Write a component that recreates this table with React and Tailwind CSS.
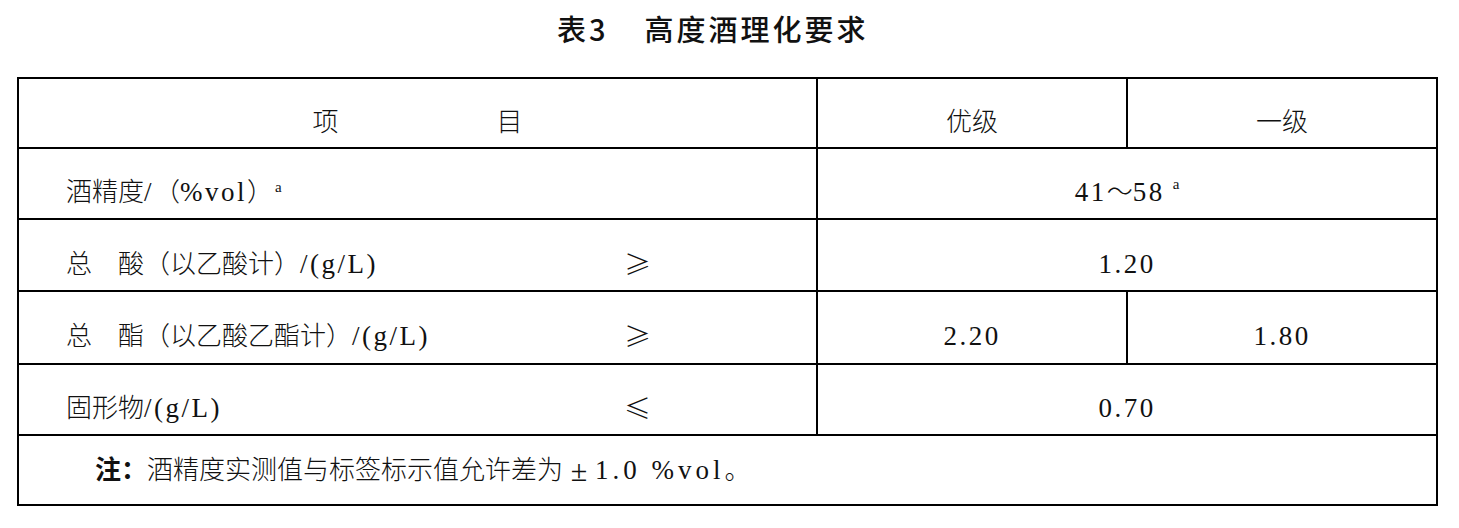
import React from "react";

const body = { fontFamily: '"Liberation Serif", "Noto Sans CJK SC", serif' };
const cjk = { fontFamily: '"Noto Sans CJK SC", sans-serif' };

// ASCII runs are set wider, like the half-width latin of the original
const A = ({ children, className = "tracking-[2.5px]" }) => <span className={`text-[27px] ${className}`}>{children}</span>;
const Sup = ({ className = "" }) => (
  <sup className={`text-[15px] relative -top-[9px] ${className}`}>a</sup>
);

const rows = [
  { h: "h-[69px]", label: <>酒精度<A>/</A>（<A>%vol</A>）<Sup className="ml-[2px]" /></>, sign: "", span: <><A>41</A>～<A>58</A><Sup className="ml-[8px]" /></> },
  { h: "h-[70px]", label: <>总　酸（以乙酸计）<A>/(g/L)</A></>, sign: "≥", span: <A>1.20</A> },
  { h: "h-[71px]", label: <>总　酯（以乙酸乙酯计）<A>/(g/L)</A></>, sign: "≥", a: <A>2.20</A>, b: <A>1.80</A> },
  { h: "h-[69px]", label: <>固形物<A>/(g/L)</A></>, sign: "≤", span: <A>0.70</A> },
];

export default function App() {
  return (
    <div className="w-[1459px] h-[528px] bg-white text-[#111] overflow-hidden">
      <div className="h-[58px] pl-[557px] pt-[8px] flex items-start">
        <div className="text-[29px] leading-[40px] font-medium tracking-[3px]" style={cjk}>
          表3<span className="ml-[36px]">高度酒理化要求</span>
        </div>
      </div>

      <table className="ml-[17px] mt-[19px] border-collapse table-fixed text-[26px] font-light" style={body}>
        <colgroup>
          <col className="w-[799px]" />
          <col className="w-[310px]" />
          <col className="w-[310px]" />
        </colgroup>
        <tbody>
          <tr>
            <td className="border-2 border-black p-0">
              <div className="h-[68px] pt-[18px] flex items-center justify-center gap-[158px]">
                <span>项</span><span>目</span>
              </div>
            </td>
            <td className="border-2 border-black p-0">
              <div className="h-[68px] pt-[18px] flex items-center justify-center">优级</div>
            </td>
            <td className="border-2 border-black p-0">
              <div className="h-[68px] pt-[18px] flex items-center justify-center">一级</div>
            </td>
          </tr>
          {rows.map((r, i) => (
            <tr key={i}>
              <td className="border-2 border-black p-0">
                <div className={`${r.h} pt-[18px] pl-[47px] flex items-center`}>
                  <span className="w-[558px] shrink-0">{r.label}</span>
                  <span className="text-[27px]" style={cjk}>{r.sign}</span>
                </div>
              </td>
              {r.span ? (
                <td colSpan={2} className="border-2 border-black p-0">
                  <div className={`${r.h} pt-[18px] flex items-center justify-center`}>{r.span}</div>
                </td>
              ) : (
                <>
                  <td className="border-2 border-black p-0">
                    <div className={`${r.h} pt-[18px] flex items-center justify-center`}>{r.a}</div>
                  </td>
                  <td className="border-2 border-black p-0">
                    <div className={`${r.h} pt-[18px] flex items-center justify-center`}>{r.b}</div>
                  </td>
                </>
              )}
            </tr>
          ))}
          <tr>
            <td colSpan={3} className="border-2 border-black p-0">
              <div className="h-[68px] pl-[76px] flex items-center">
                <span className="font-bold">注：</span>酒精度实测值与标签标示值允许差为
                <span className="inline-block w-[32px] text-center text-[30px]">±</span>
                <A className="tracking-[4px]">1.0 %vol</A>。
              </div>
            </td>
          </tr>
        </tbody>
      </table>
    </div>
  );
}
